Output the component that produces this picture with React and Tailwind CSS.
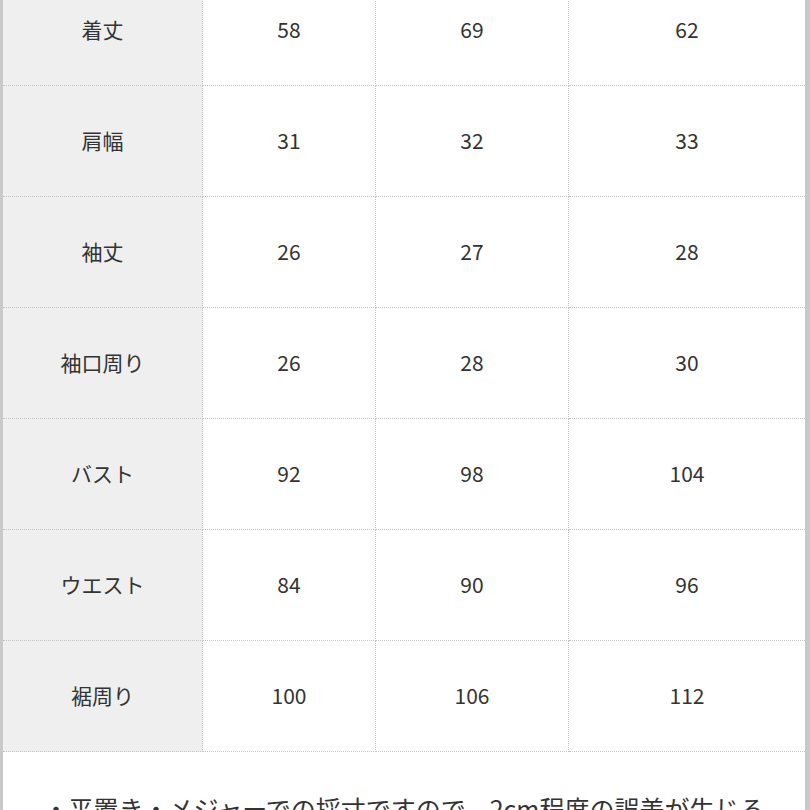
import React from 'react';

const rows = [
  ['着丈', '58', '69', '62'],
  ['肩幅', '31', '32', '33'],
  ['袖丈', '26', '27', '28'],
  ['袖口周り', '26', '28', '30'],
  ['バスト', '92', '98', '104'],
  ['ウエスト', '84', '90', '96'],
  ['裾周り', '100', '106', '112'],
];

const SizeTable = () => {
  return (
    <div className="w-[810px] h-[810px] overflow-hidden bg-white text-[#333]" style={{ fontFamily: '"Noto Sans CJK JP", "Noto Sans", sans-serif' }}>
      <div className="-mt-[25px] border-l-[3px] border-r-[5px] border-[#c9c9c9]">
        {rows.map((r) => (
          <div key={r[0]} className="grid grid-cols-[200px_173px_193px_1fr] h-[111px] text-[21px]">
            <div className="flex items-center justify-center bg-[#efefef] border-r border-b border-dotted border-[#c4c4c4]">{r[0]}</div>
            <div className="flex items-center justify-center border-r border-b border-dotted border-[#c4c4c4]">{r[1]}</div>
            <div className="flex items-center justify-center border-r border-b border-dotted border-[#c4c4c4]">{r[2]}</div>
            <div className="flex items-center justify-center border-b border-dotted border-[#c4c4c4]">{r[3]}</div>
          </div>
        ))}
        <div className="pt-[38px] pb-10 text-center text-[25px] leading-[1.5]">
          ・平置き・メジャーでの採寸ですので、2cm程度の誤差が生じる
        </div>
      </div>
    </div>
  );
};

export default SizeTable;
